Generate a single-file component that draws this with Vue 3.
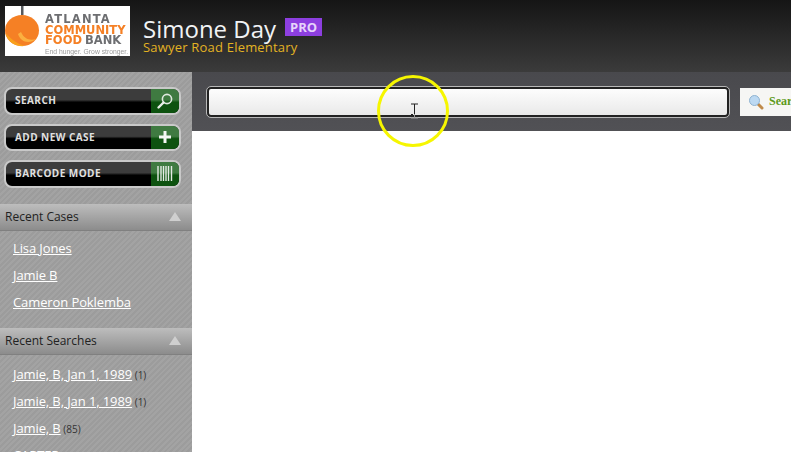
<template>
  <div class="page">
    <header class="topbar">
      <div class="logo">
        <svg class="peach" width="36" height="44" viewBox="0 0 36 44">
          <rect x="16" y="0" width="2.500" height="9" fill="#55585c" />
          <ellipse cx="17" cy="24.500" rx="17" ry="15.500" fill="#f58025" />
          <path d="M0.500 27 C3 37 11 41 20 40 C12 38 6 33 0.500 27 Z" fill="#f9a11b" />
          <path d="M13 28 C16 37 25 38 31 33 C25 35 19 33 16 26 Z" fill="#fbb040" />
        </svg>
        <div class="logo-text">
          <div class="l1">ATLANTA</div>
          <div class="l2">COMMUNITY</div>
          <div class="l3">FOOD<span>BANK</span></div>
          <div class="l4">End hunger. Grow stronger.</div>
        </div>
      </div>
      <div class="who">
        <div class="name-row">
          <span class="name">Simone Day</span>
          <span class="pro">PRO</span>
        </div>
        <div class="school">Sawyer Road Elementary</div>
      </div>
    </header>

    <div class="body">
      <aside class="side">
        <div class="actions">
          <a class="action" v-for="a in actions" :key="a.label">
            <span class="action-label">{{ a.label }}</span>
            <span class="action-icon">
              <svg v-if="a.icon === 'search'" width="18" height="18" viewBox="0 0 18 18">
                <circle cx="11" cy="7" r="4.600" fill="none" stroke="#dfe8df" stroke-width="1.600" />
                <path d="M7.500 10.500 L2.500 15.500" stroke="#e8eee8" stroke-width="2.400" stroke-linecap="round" />
              </svg>
              <svg v-else-if="a.icon === 'plus'" width="14" height="14" viewBox="0 0 14 14">
                <path d="M7 1 V13 M1 7 H13" stroke="#f4f7f4" stroke-width="3" />
              </svg>
              <svg v-else width="16" height="15" viewBox="0 0 16 15">
                <path d="M1 0V15M4 0V15M6.500 0V15M9 0V15M11.500 0V15M14.500 0V15" stroke="#e6ebe6" stroke-width="1.400" />
              </svg>
            </span>
          </a>
        </div>

        <section v-for="g in groups" :key="g.title" class="group">
          <div class="group-head">
            <span>{{ g.title }}</span>
            <i class="tri"></i>
          </div>
          <ul class="links">
            <li v-for="(l, i) in g.items" :key="i">
              <a>{{ l.text }}</a>
              <small v-if="l.count"> ({{ l.count }})</small>
            </li>
          </ul>
        </section>
      </aside>

      <main class="main">
        <div class="search-band">
          <input class="search-input" type="text" />
          <button class="search-btn">
            <svg width="16" height="16" viewBox="0 0 16 16">
              <path d="M10 10 L14 14" stroke="#c08a4a" stroke-width="3" stroke-linecap="round" />
              <circle cx="6.500" cy="6.500" r="5" fill="#bcd9f2" stroke="#8fb3d1" />
            </svg>
            <span>Search</span>
          </button>
        </div>
      </main>
    </div>

    <!-- screen recording cursor highlight -->
    <div class="halo"></div>
    <svg class="ibeam" width="9" height="16" viewBox="0 0 9 16">
      <path d="M1 1 H8 M4.500 1 V11 M1 11.500 H3" stroke="#222" stroke-width="1" fill="none" />
      <path d="M4.500 11 V15 M1 15 H8" stroke="#999" stroke-width="1" fill="none" />
    </svg>
  </div>
</template>

<script setup>
const actions = [
  { label: 'SEARCH', icon: 'search' },
  { label: 'ADD NEW CASE', icon: 'plus' },
  { label: 'BARCODE MODE', icon: 'barcode' }
]

const groups = [
  {
    title: 'Recent Cases',
    items: [{ text: 'Lisa Jones' }, { text: 'Jamie B' }, { text: 'Cameron Poklemba' }]
  },
  {
    title: 'Recent Searches',
    items: [
      { text: 'Jamie, B, Jan 1, 1989', count: 1 },
      { text: 'Jamie, B, Jan 1, 1989', count: 1 },
      { text: 'Jamie, B', count: 85 },
      { text: 'CARTER' }
    ]
  }
]
</script>

<style>
html, body {
  margin: 0;
  background: #fff;
  overflow: hidden;
}
</style>

<style scoped>
.page {
  position: relative;
  width: 791px;
  height: 452px;
  overflow: hidden;
  display: flex;
  flex-direction: column;
  font-family: "Open Sans", "DejaVu Sans", sans-serif;
}

.topbar {
  height: 72px;
  flex: none;
  box-sizing: border-box;
  padding: 6px 0 0 5px;
  display: flex;
  gap: 13px;
  background: linear-gradient(#151515, #3b3b3b);
}

.logo {
  width: 125px;
  height: 50px;
  background: #fff;
  display: flex;
  align-items: flex-start;
  gap: 4px;
  overflow: hidden;
  filter: blur(0.4px);
}
.peach {
  flex: none;
}
.logo-text {
  padding-top: 8px;
  font-family: "DejaVu Sans", sans-serif;
  font-weight: bold;
  color: #f58025;
  line-height: 10.500px;
  font-size: 11.500px;
  white-space: nowrap;
}
.l1, .l3 span {
  color: #6d6e71;
}
.l1 {
  letter-spacing: 1.200px;
}
.l3 span {
  margin-left: 3px;
}
.l4 {
  font-family: "Liberation Sans", sans-serif;
  font-size: 6.800px;
  font-weight: normal;
  color: #999;
  line-height: 8px;
  margin-top: 2px;
}

.who {
  padding-top: 9px;
}
.name-row {
  display: flex;
  align-items: flex-start;
  gap: 9px;
}
.name {
  color: #f1f3f5;
  font-size: 24px;
  line-height: 28px;
}
.pro {
  margin-top: 3px;
  background: #8d3fe0;
  color: #e6d5fa;
  font-weight: bold;
  font-size: 13px;
  line-height: 18px;
  padding: 0 5px;
}
.school {
  color: #e3b323;
  font-size: 13px;
  line-height: 14px;
  letter-spacing: 0.2px;
  margin-top: -3px;
}

.body {
  flex: 1;
  display: flex;
  min-height: 0;
}

.side {
  width: 192px;
  flex: none;
  box-sizing: border-box;
  padding-top: 15px;
  background: repeating-linear-gradient(135deg, #9c9c9c 0 2px, #a3a3a3 2px 4px);
  overflow: hidden;
}

.actions {
  display: flex;
  flex-direction: column;
  gap: 9px;
  padding: 0 11px 0 4px;
  margin-bottom: 16px;
}
.action {
  height: 27.500px;
  box-sizing: border-box;
  border: 2px solid #c9c9c9;
  border-radius: 8px;
  display: flex;
  overflow: hidden;
  background: linear-gradient(#3c3c3c 0 45%, #000 55%);
}
.action-label {
  flex: 1;
  padding-left: 9px;
  color: #e0e0e0;
  font-weight: bold;
  font-size: 10px;
  line-height: 23px;
  letter-spacing: 0.45px;
}
.action-icon {
  width: 28px;
  display: flex;
  align-items: center;
  justify-content: center;
  background: linear-gradient(#3f7a41 0 45%, #0d520f 55%);
}

.group-head {
  height: 27px;
  box-sizing: border-box;
  border-bottom: 1px solid #808080;
  padding: 0 11px 0 5px;
  display: flex;
  align-items: center;
  justify-content: space-between;
  color: #222;
  font-size: 12px;
  background: linear-gradient(#bdbdbd, #8c8c8c);
}
.tri {
  width: 0;
  height: 0;
  border-left: 6px solid transparent;
  border-right: 6px solid transparent;
  border-bottom: 9px solid #cfcfcf;
}
.links {
  list-style: none;
  margin: 0;
  padding: 3px 0 13px 13px;
}
.group + .group .links {
  padding-top: 5px;
}
.links li {
  height: 27px;
  line-height: 27px;
  white-space: nowrap;
}
.links a {
  color: #fff;
  font-size: 13px;
  letter-spacing: -0.1px;
  text-decoration: underline;
}
.links small {
  color: #333;
  font-size: 10px;
}

.main {
  flex: 1;
  min-width: 0;
  background: #fff;
}
.search-band {
  height: 59px;
  box-sizing: border-box;
  padding-left: 15px;
  display: flex;
  align-items: center;
  gap: 11px;
  background: linear-gradient(#49494d, #515155);
}
.search-input {
  width: 522px;
  height: 30px;
  flex: none;
  box-sizing: border-box;
  border: 2px solid #222;
  outline: 1px solid #b8b8b8;
  border-radius: 4px;
  background: linear-gradient(#fdfdfd, #e9e9e9);
}
.search-btn {
  flex: none;
  width: 110px;
  height: 28px;
  border: 0;
  padding: 0 0 0 8px;
  display: flex;
  align-items: center;
  gap: 5px;
  background: #f6f6f4;
  color: #5d9a1a;
  font-family: "Liberation Serif", serif;
  font-weight: bold;
  font-size: 12px;
}

.halo {
  position: absolute;
  left: 377px;
  top: 75px;
  width: 72px;
  height: 72px;
  box-sizing: border-box;
  border: 3px solid #f6f600;
  border-radius: 50%;
}
.ibeam {
  position: absolute;
  left: 410px;
  top: 103px;
}
</style>
